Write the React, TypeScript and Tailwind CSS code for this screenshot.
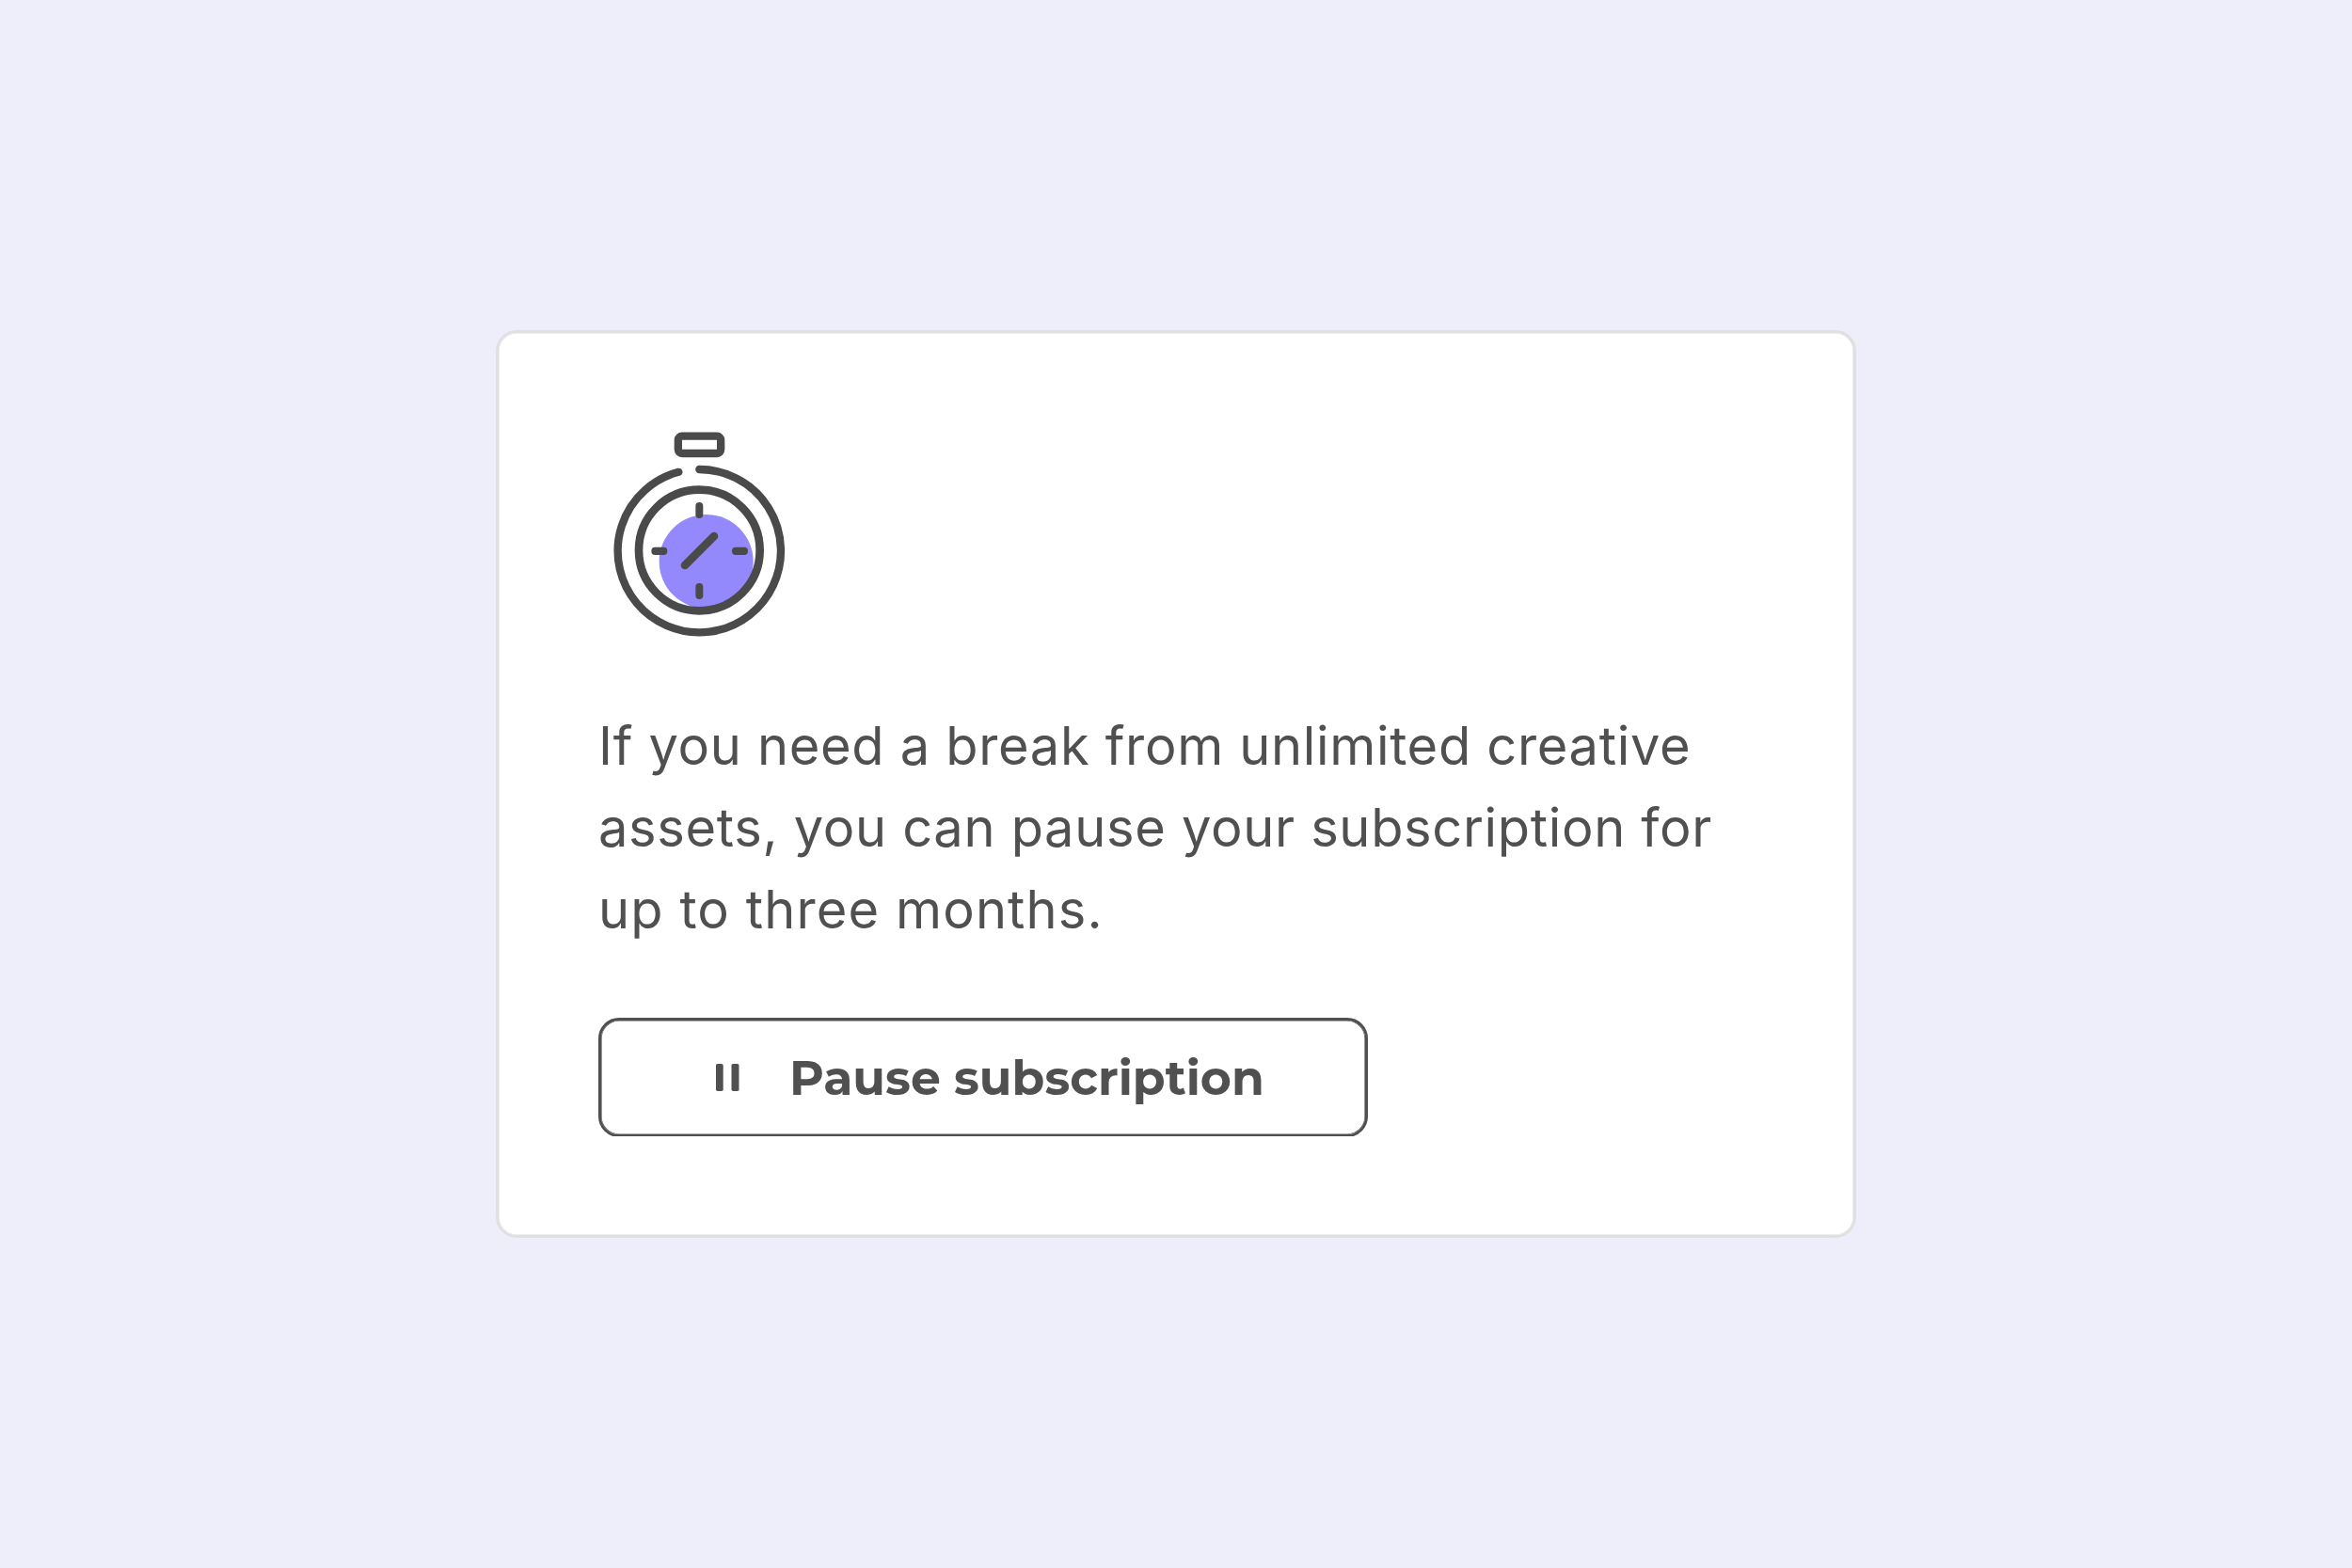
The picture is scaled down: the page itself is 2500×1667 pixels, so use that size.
import React from 'react';

function StopwatchIcon() {
  return (
    <svg width="200" height="218" viewBox="18 57 600 654" fill="none" stroke="#4a4a4a" className="block">
      <circle cx="362" cy="471" r="150" fill="#9488fd" stroke="none" />
      <rect x="272.5" y="71" width="136" height="55" rx="12.5" strokeWidth="25" />
      <path d="M340 177 A260 260 0 1 1 274 185.5" strokeWidth="25" strokeLinecap="round" />
      <circle cx="340" cy="435" r="193" strokeWidth="26" />
      <g fill="#4a4a4a" stroke="none">
        <rect x="328" y="282" width="24" height="51" rx="12" />
        <rect x="328" y="540" width="24" height="51" rx="12" />
        <rect x="187" y="425" width="51" height="25" rx="12" />
        <rect x="444" y="425" width="51" height="25" rx="12" />
      </g>
      <path d="M294 483 L387 390" strokeWidth="26" strokeLinecap="round" />
    </svg>
  );
}

function PauseIcon() {
  return (
    <svg width="25" height="29" viewBox="0 0 25 29" fill="#505050" className="block">
      <rect x="0" y="0" width="7.7" height="29" rx="1.8" />
      <rect x="16.5" y="0" width="8" height="29" rx="1.8" />
    </svg>
  );
}

function App() {
  return (
    <div className="flex h-screen justify-center bg-[#eeeefa] pt-[351px]">
      <div className="h-[965px] w-[1446px] rounded-[22px] border-[3px] border-[#e0e0e2] bg-white pt-[105px] pl-[106px] shadow-[inset_0_0_0_0.6px_#e0e0e2]">
        <StopwatchIcon />

        <p className="mt-[73px] whitespace-nowrap font-['Inter',sans-serif] text-[56px] leading-[87px] tracking-[0.66px] text-[#505050]">
          If you need a break from unlimited creative
          <br />
          assets, you can pause your subscription for
          <br />
          <span className="tracking-[1.1px]">up to three months.</span>
        </p>

        {/* the outline is one pixel short at the bottom edge */}
        <div className="mt-[71px] h-[126px] overflow-hidden">
          <button className="flex h-[127px] w-[818px] items-center rounded-[22px] border-[3px] border-[#505050] pl-[122px] shadow-[inset_0_0_0_0.6px_#505050]">
            <PauseIcon />
            <span className="ml-[53px] whitespace-nowrap pt-[2px] font-['Montserrat','Inter',sans-serif] text-[50.5px] leading-none font-bold text-[#505050]">
              Pause subscription
            </span>
          </button>
        </div>
      </div>
    </div>
  );
}

export default App;
